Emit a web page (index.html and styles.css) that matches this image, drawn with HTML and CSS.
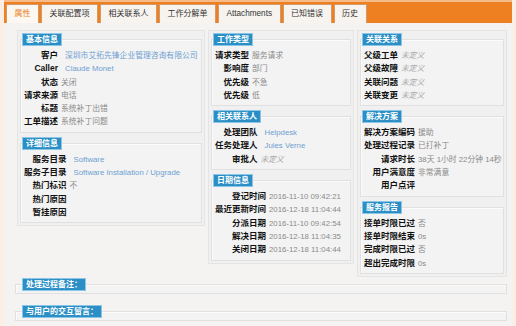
FILE: index.html
```html
<!DOCTYPE html>
<html lang="zh">
<head>
<meta charset="utf-8">
<title>工单属性</title>
<link rel="stylesheet" href="styles.css">
</head>
<body>
<div class="page">
  <nav class="tabs">
    <span class="tab active">属性</span>
    <span class="tab">关联配置项</span>
    <span class="tab">相关联系人</span>
    <span class="tab">工作分解单</span>
    <span class="tab latin">Attachments</span>
    <span class="tab">已知错误</span>
    <span class="tab">历史</span>
  </nav>
  <div class="content">
    <div class="cols">
      <div class="col c1">
        <fieldset class="sec">
          <legend>基本信息</legend>
          <div class="kv">
            <span class="k">客户</span><span class="v link">深圳市艾拓先锋企业管理咨询有限公司</span>
            <span class="k">Caller</span><span class="v link">Claude Monet</span>
            <span class="k">状态</span><span class="v">关闭</span>
            <span class="k">请求来源</span><span class="v">电话</span>
            <span class="k">标题</span><span class="v">系统补丁出错</span>
            <span class="k">工单描述</span><span class="v">系统补丁问题</span>
          </div>
        </fieldset>
        <fieldset class="sec">
          <legend>详细信息</legend>
          <div class="kv">
            <span class="k">服务目录</span><span class="v link">Software</span>
            <span class="k">服务子目录</span><span class="v link">Software Installation / Upgrade</span>
            <span class="k">热门标识</span><span class="v">不</span>
            <span class="k">热门原因</span><span class="v"></span>
            <span class="k">暂挂原因</span><span class="v"></span>
          </div>
        </fieldset>
      </div>
      <div class="col c2">
        <fieldset class="sec">
          <legend>工作类型</legend>
          <div class="kv">
            <span class="k">请求类型</span><span class="v">服务请求</span>
            <span class="k">影响度</span><span class="v">部门</span>
            <span class="k">优先级</span><span class="v">不急</span>
            <span class="k">优先级</span><span class="v">低</span>
          </div>
        </fieldset>
        <fieldset class="sec">
          <legend>相关联系人</legend>
          <div class="kv">
            <span class="k">处理团队</span><span class="v link">Helpdesk</span>
            <span class="k">任务处理人</span><span class="v link">Jules Verne</span>
            <span class="k">审批人</span><span class="v undef">未定义</span>
          </div>
        </fieldset>
        <fieldset class="sec">
          <legend>日期信息</legend>
          <div class="kv">
            <span class="k">登记时间</span><span class="v">2016-11-10 09:42:21</span>
            <span class="k">最近更新时间</span><span class="v">2016-12-18 11:04:44</span>
            <span class="k">分派日期</span><span class="v">2016-11-10 09:42:54</span>
            <span class="k">解决日期</span><span class="v">2016-12-18 11:04:35</span>
            <span class="k">关闭日期</span><span class="v">2016-12-18 11:04:44</span>
          </div>
        </fieldset>
      </div>
      <div class="col c3">
        <fieldset class="sec">
          <legend>关联关系</legend>
          <div class="kv">
            <span class="k">父级工单</span><span class="v undef">未定义</span>
            <span class="k">父级故障</span><span class="v undef">未定义</span>
            <span class="k">关联问题</span><span class="v undef">未定义</span>
            <span class="k">关联变更</span><span class="v undef">未定义</span>
          </div>
        </fieldset>
        <fieldset class="sec">
          <legend>解决方案</legend>
          <div class="kv">
            <span class="k">解决方案编码</span><span class="v">援助</span>
            <span class="k">处理过程记录</span><span class="v">已打补丁</span>
            <span class="k">请求时长</span><span class="v">38天 1小时 22分钟 14秒</span>
            <span class="k">用户满意度</span><span class="v">非常满意</span>
            <span class="k">用户点评</span><span class="v"></span>
          </div>
        </fieldset>
        <fieldset class="sec">
          <legend>服务报告</legend>
          <div class="kv">
            <span class="k">接单时限已过</span><span class="v">否</span>
            <span class="k">接单时限结束</span><span class="v">0s</span>
            <span class="k">完成时限已过</span><span class="v">否</span>
            <span class="k">超出完成时限</span><span class="v">0s</span>
          </div>
        </fieldset>
      </div>
    </div>
    <div class="notes">
      <fieldset class="sec wide">
        <legend>处理过程备注：</legend>
      </fieldset>
      <fieldset class="sec wide second">
        <legend>与用户的交互留言：</legend>
      </fieldset>
    </div>
  </div>
</div>
</body>
</html>
```
FILE: styles.css
```css
* { box-sizing: border-box; }
html, body { margin: 0; padding: 0; }
body {
  background: #fbeee4;
  width: 516px;
  height: 326px;
  overflow: hidden;
  font-family: "Liberation Sans", "Noto Sans CJK SC", sans-serif;
}
.page {
  margin-left: 4px;
  width: 508px;
  height: 326px;
  background: #f5f3f2;
}
.tabs {
  display: flex;
  gap: 2px;
  height: 23px;
  padding: 2px 0 0 2px;
  background: #ee8021;
  border-top: 2px solid #f6bb8b;
}
.tab {
  height: 19px;
  padding: 0 7.5px;
  border: 1px solid #d39a66;
  border-bottom: none;
  background: #f7f3ef;
  color: #333;
  font-size: 8px;
  line-height: 17px;
  white-space: nowrap;
}
.tab.latin { font-size: 8.2px; }
.tab.active {
  background: #fdf7f1;
  color: #e8801e;
}
.content {
  padding: 7px 5px 0 13px;
}
.cols {
  display: flex;
  gap: 3px;
  align-items: flex-start;
}
.col {
  background: #f0f0f0;
  border: 1px solid #e4e4e4;
  padding: 2px;
}
.c1 { width: 188px; }
.c2 { width: 146px; }
.c3 { width: 150px; }
.sec {
  margin: 0;
  min-width: 0;
  padding: 0 0 3px 0;
  border: 1px solid #e0e0e0;
  background: #f3f3f3;
  box-shadow: inset 1px 1px 0 #fbfbfb;
}
.sec + .sec { margin-top: 4px; }
.sec legend {
  margin-left: 1px;
  padding: 0 3px;
  height: 13px;
  line-height: 11px;
  border: 1px solid #8cc6e7;
  background: #2b8fc6;
  color: #fff;
  font-size: 8px;
  font-weight: bold;
  white-space: nowrap;
}
.kv {
  display: grid;
  grid-template-columns: max-content 1fr;
  column-gap: 3px;
  padding: 3px 2px 0 3px;
  line-height: 13.3px;
}
.k {
  text-align: right;
  font-size: 8.5px;
  font-weight: bold;
  color: #111;
  white-space: nowrap;
}
.v {
  font-size: 7.8px;
  color: #8a8a8a;
  white-space: nowrap;
}
.v.link {
  color: #6e9fd2;
  padding-left: 4px;
}
.v.undef {
  font-style: italic;
  color: #aaa;
}
.notes {
  margin: 1px 0 0 -2px;
}
.sec.wide {
  padding-bottom: 2px;
}
.sec.wide legend { margin-left: 6px; }
.sec.wide.second { margin-top: 11px; }
```
